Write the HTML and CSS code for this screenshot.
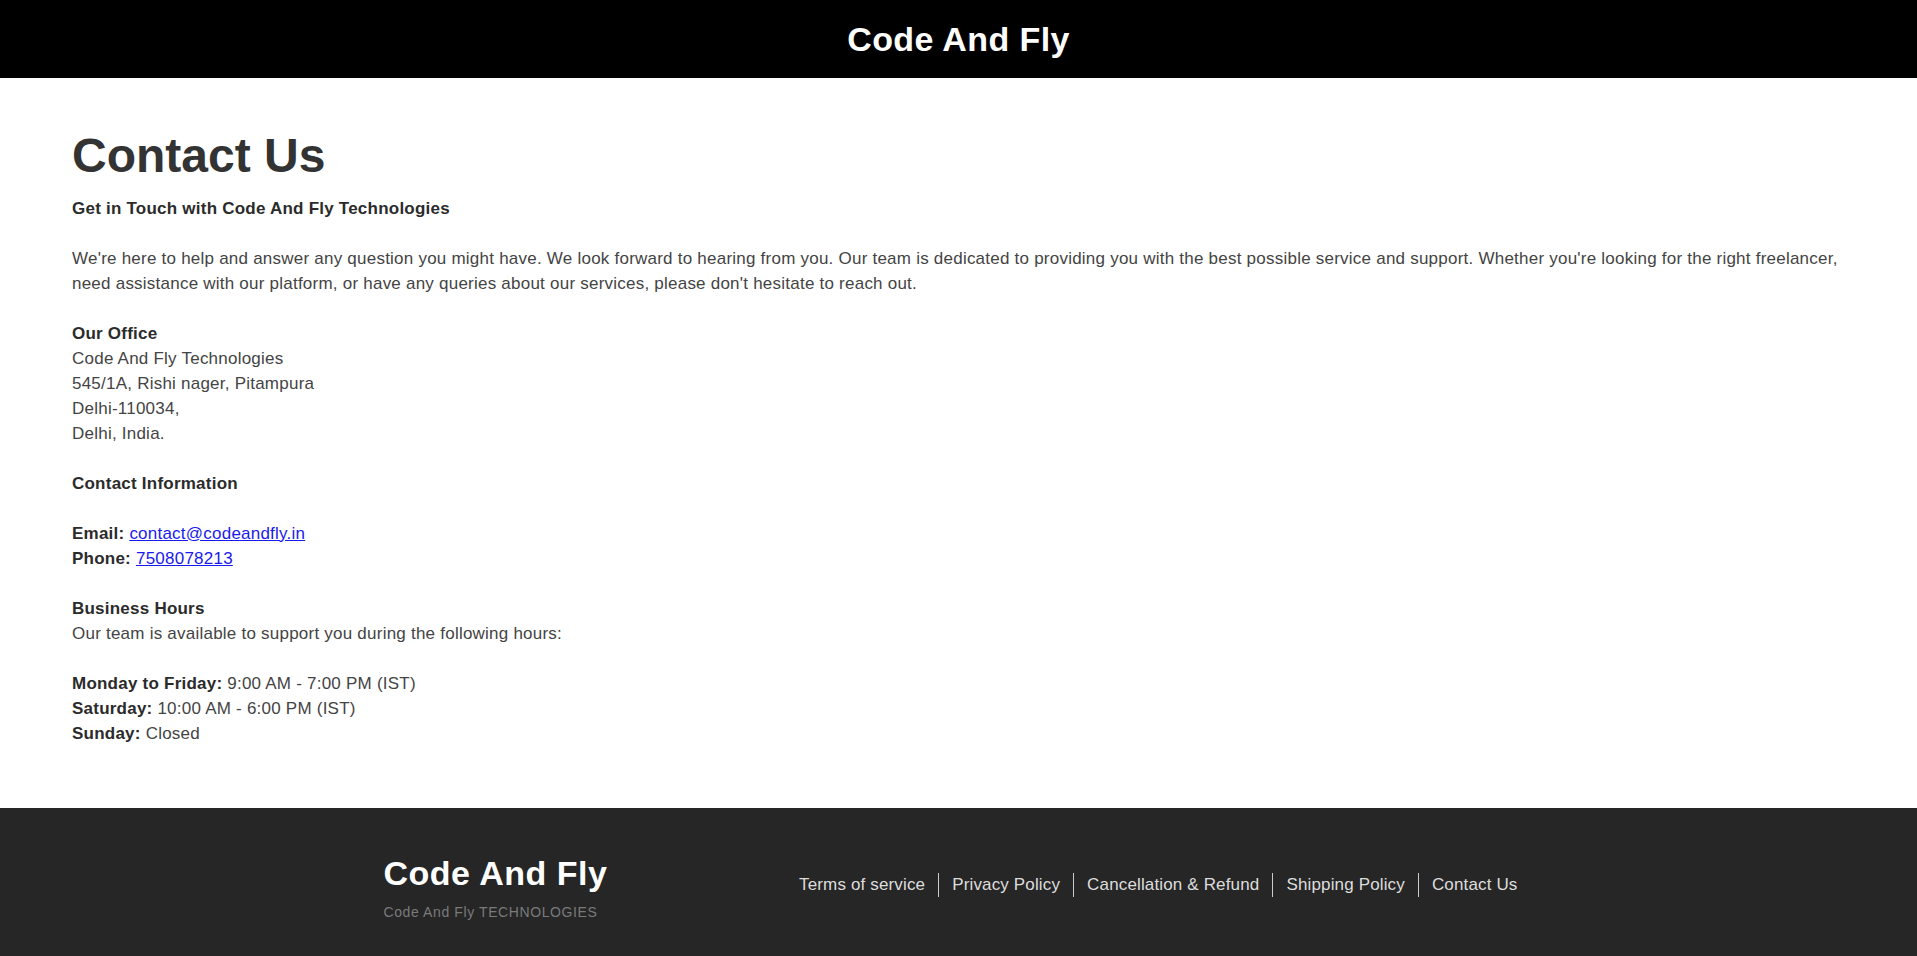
FILE: index.html
```html
<!DOCTYPE html>
<html lang="en">
<head>
<meta charset="utf-8">
<title>Contact Us - Code And Fly</title>
<link rel="stylesheet" href="styles.css">
</head>
<body>
<header class="site-header">
  <div class="brand">Code And Fly</div>
</header>

<main class="content">
  <h1 class="page-title">Contact Us</h1>
  <p class="block"><strong>Get in Touch with Code And Fly Technologies</strong></p>
  <p class="block">We're here to help and answer any question you might have. We look forward to hearing from you. Our team is dedicated to providing you with the best possible service and support. Whether you're looking for the right freelancer, need assistance with our platform, or have any queries about our services, please don't hesitate to reach out.</p>
  <p class="block"><strong>Our Office</strong><br>Code And Fly Technologies<br>545/1A, Rishi nager, Pitampura<br>Delhi-110034,<br>Delhi, India.</p>
  <p class="block"><strong>Contact Information</strong></p>
  <p class="block"><strong>Email:</strong> <a href="#">contact@codeandfly.in</a><br><strong>Phone:</strong> <a href="#">7508078213</a></p>
  <p class="block"><strong>Business Hours</strong><br>Our team is available to support you during the following hours:</p>
  <p class="block last"><strong>Monday to Friday:</strong> 9:00 AM - 7:00 PM (IST)<br><strong>Saturday:</strong> 10:00 AM - 6:00 PM (IST)<br><strong>Sunday:</strong> Closed</p>
</main>

<footer class="site-footer">
  <div class="footer-inner">
    <div class="footer-brand">
      <div class="footer-title">Code And Fly</div>
      <div class="footer-sub">Code And Fly TECHNOLOGIES</div>
    </div>
    <nav class="footer-links">
      <a href="#" class="flink">Terms of service</a>
      <a href="#" class="flink">Privacy Policy</a>
      <a href="#" class="flink">Cancellation &amp; Refund</a>
      <a href="#" class="flink">Shipping Policy</a>
      <a href="#" class="flink">Contact Us</a>
    </nav>
  </div>
</footer>
</body>
</html>
```

FILE: styles.css
```css
* { box-sizing: border-box; }

html, body {
  margin: 0;
  padding: 0;
  background: #ffffff;
}

body {
  font-family: "Liberation Sans", Arial, Helvetica, sans-serif;
  color: #333333;
}

.site-header {
  height: 78px;
  background: #000000;
  display: flex;
  align-items: center;
  justify-content: center;
}

.brand {
  color: #ffffff;
  font-size: 34px;
  font-weight: bold;
  letter-spacing: 0.4px;
  line-height: 38px;
}

.content {
  padding: 50.6px 72px 62.5px 72px;
}

.page-title {
  margin: 0 0 13px 0;
  font-size: 48px;
  line-height: 54px;
  font-weight: bold;
  color: #333333;
}

.block {
  margin: 0 0 25px 0;
  font-size: 17px;
  letter-spacing: 0.23px;
  line-height: 25px;
  color: #444444;
}

.block strong {
  color: #2b2b2b;
}

.block.last {
  margin-bottom: 0;
}

.block a {
  color: #1a1aee;
  text-decoration: underline;
}

.site-footer {
  background: #262626;
  padding: 46px 0 37px 0;
}

.footer-inner {
  width: 1150px;
  margin: 0 auto;
  display: flex;
  justify-content: space-between;
  align-items: flex-start;
}

.footer-title {
  color: #ffffff;
  font-size: 34px;
  font-weight: bold;
  letter-spacing: 0.5px;
  line-height: 38px;
}

.footer-sub {
  margin-top: 12px;
  color: #7a7a7a;
  font-size: 14px;
  letter-spacing: 0.6px;
  line-height: 17px;
}

.footer-links {
  display: flex;
  margin-top: 19px;
  padding-right: 3px;
}

.flink {
  color: #dddddd;
  text-decoration: none;
  font-size: 17px;
  letter-spacing: 0.15px;
  line-height: 24px;
  padding: 0 13px;
  border-left: 1px solid #cccccc;
}

.flink:first-child {
  border-left: none;
}
```
